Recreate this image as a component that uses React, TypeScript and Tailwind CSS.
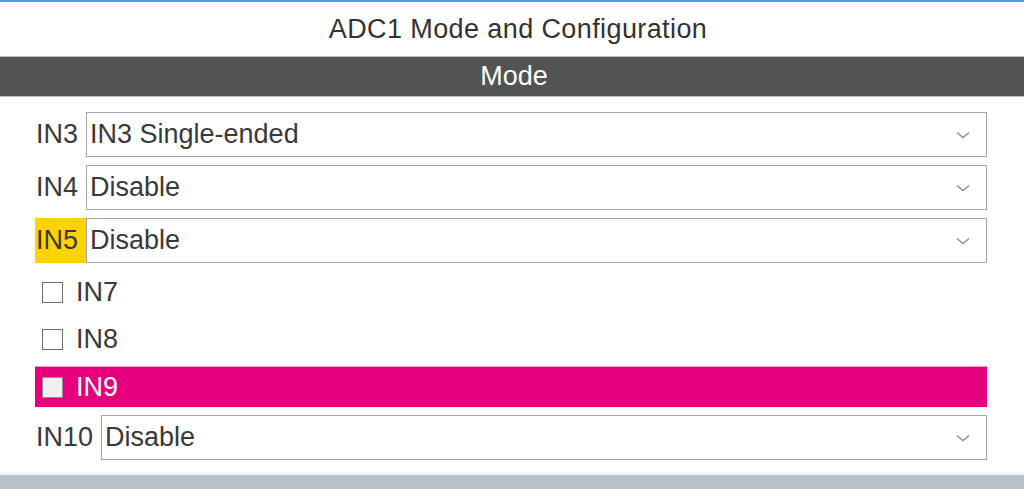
function Chevron() {
  return (
    <svg width="14" height="8" viewBox="0 0 14 8" className="shrink-0">
      <path d="M1 1.5 L7 6.5 L13 1.5" fill="none" stroke="#8c8f92" strokeWidth="1.4" />
    </svg>
  );
}

function SelectRow({
  label,
  value,
  highlight = false,
  labelWidth = "w-[51px]",
}: {
  label: string;
  value: string;
  highlight?: boolean;
  labelWidth?: string;
}) {
  return (
    <div className="flex h-[45px] items-stretch">
      <div
        className={`${labelWidth} flex items-center ${highlight ? "bg-[#ffd200]" : ""}`}
      >
        <span className="pl-[1px]">{label}</span>
      </div>
      <div className="flex flex-1 items-center justify-between border border-[#a3a7ab] bg-white pl-[3px] pr-[16px]">
        <span>{value}</span>
        <Chevron />
      </div>
    </div>
  );
}

function CheckRow({ label, selected = false }: { label: string; selected?: boolean }) {
  return (
    <div
      className={`flex items-center pl-[7px] ${
        selected
          ? "h-[41px] bg-[#e6007e] text-white border-t border-[#f49ac8]"
          : "h-[47px]"
      }`}
    >
      <span
        className={`h-[21px] w-[21px] border-[1.5px] ${
          selected ? "bg-[#eeeff1] border-[#8e9093]" : "bg-white border-[#6e6e6e]"
        }`}
      ></span>
      <span className="ml-[13px]">{label}</span>
    </div>
  );
}

export default function App() {
  return (
    <div
      className="w-[1024px] h-[489px] bg-white overflow-hidden flex flex-col text-[#3a3a3a]"
      style={{ fontFamily: '"Liberation Sans", Arial, sans-serif' }}
    >
      <div className="h-[2px] bg-[#3ea8df]"></div>
      <div className="h-[54px] flex items-center justify-center pl-[12px] text-[27px] tracking-[0.4px] text-[#333333]">
        ADC1 Mode and Configuration
      </div>
      <div className="h-[41px] flex items-center justify-center pl-[4px] bg-[#525453] border-y border-[#b9bcbd] text-[27px] text-white">
        Mode
      </div>

      <div className="flex flex-col pl-[35px] pr-[37px] pt-[15px] text-[27px] leading-none">
        <div className="flex flex-col gap-[8px]">
          <SelectRow label="IN3" value="IN3 Single-ended" />
          <SelectRow label="IN4" value="Disable" />
          <SelectRow label="IN5" value="Disable" highlight />
        </div>
        <div className="mt-[6px] flex flex-col">
          <CheckRow label="IN7" />
          <CheckRow label="IN8" />
          <div className="mt-[3px]">
            <CheckRow label="IN9" selected />
          </div>
        </div>
        <div className="mt-[8px]">
          <SelectRow label="IN10" value="Disable" labelWidth="w-[66px]" />
        </div>
      </div>

      <div className="mt-auto h-[2px] bg-[#eef0f1]"></div>
      <div className="h-[14px] bg-[#b8c2c8]"></div>
    </div>
  );
}
